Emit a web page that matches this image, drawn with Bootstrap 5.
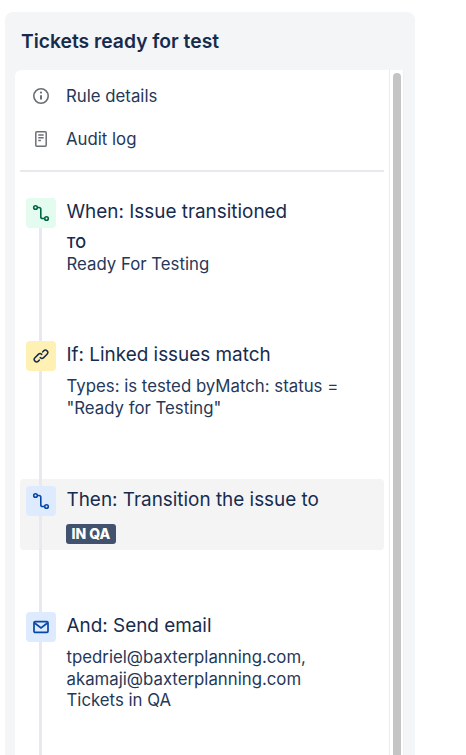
<!DOCTYPE html>
<html lang="en">
<head>
<meta charset="utf-8">
<title>Tickets ready for test</title>
<link href="https://cdn.jsdelivr.net/npm/bootstrap@5.3.0/dist/css/bootstrap.min.css" rel="stylesheet">
<style>
html,body{height:755px;overflow:hidden;background:#fff}
body{font-family:Inter,"Liberation Sans",sans-serif;color:#172b4d;font-size:16px}
.panel-shell{position:relative;margin:12px 0 0 5px;width:410px;height:743px;background:#f4f5f7;border-radius:8px 8px 0 0}
.panel-title{font-size:19.3px;font-weight:600;line-height:22px;padding:18px 0 0 16px;height:58px;margin:0;color:#172b4d}
.panel-body{margin-left:10px;width:389px;height:685px;background:#fff;border-radius:6px 0 0 0;overflow:hidden}
.panel-scroller{flex:1 1 auto;min-width:0}
.scroll-track{flex:0 0 14px;border-left:1px solid #ececec;border-right:1px solid #f0f0f0;padding:3px 2px 0 3px;background:#fff}
.scroll-thumb{width:8px;height:100%;background:#c4c4c4;border-radius:4px 4px 0 0}
.side-link{height:43px;padding-left:17px;gap:16px;font-size:16.8px;color:#253858}
.side-link span{padding-top:2px}
.side-icon{width:18px;height:18px;flex:none}
.rule-divider{height:2px;background:#e8e9ec;margin:10px 5px 0 5px}
.flow{position:relative;padding:0 5px 0 5px}
.flow-line{position:absolute;left:24px;top:40px;width:3px;height:600px;background:#e8e9ee;z-index:1}
.flow-step{position:relative;padding:0 6px;gap:10.5px;border-radius:4px}
.flow-step.active-step{background:#f4f4f4}
.step-badge{width:30px;height:30px;border-radius:4px;flex:none;position:relative;z-index:2}
.tone-green{background:#e3fcef;color:#006644}
.tone-yellow{background:#fff0b3;color:#172b4d}
.tone-blue{background:#deebff;color:#0747a6}
.step-title{font-size:18.9px;line-height:26px;color:#172b4d;margin-top:1px}
.step-text{font-size:16.8px;line-height:21.5px;color:#253858}
.to-label{font-size:14px;font-weight:600;line-height:22px;color:#172b4d;margin-top:7px}
.status-pill{display:inline-block;background:#42526e;color:#fff;font-size:14px;font-weight:800;line-height:20px;padding:0 5.5px;margin-left:-.5px;border-radius:3px}
.s1{height:169px;padding-top:26px}
.s2{height:138px}
.s3{height:71px;padding-top:7px}
.s4{height:120px;margin-top:62px}
</style>
</head>
<body>
<div class="panel-shell">
  <h1 class="panel-title">Tickets ready for test</h1>
  <div class="panel-body d-flex">
    <div class="panel-scroller">
      <div class="pt-1">
      <div class="side-link d-flex align-items-center">
        <svg class="side-icon" viewBox="0 0 18 18" fill="none" stroke="#6b6f76" stroke-width="1.6"><circle cx="9" cy="9" r="7.2"/><path d="M9 8.2v4.3" stroke-width="2"/><circle cx="9" cy="5.6" r="1.1" fill="#6b6f76" stroke="none"/></svg>
        <span>Rule details</span>
      </div>
      <div class="side-link d-flex align-items-center">
        <svg class="side-icon" viewBox="0 0 18 18" fill="none" stroke="#6b6f76" stroke-width="1.5"><rect x="3.8" y="1.8" width="10.4" height="14.4" rx="1"/><path d="M6.3 5h5.4M6.3 7.8h5.4M6.3 10.4h2.6"/></svg>
        <span>Audit log</span>
      </div>
      </div>
      <div class="rule-divider"></div>
      <div class="flow">
        <div class="flow-line"></div>
        <div class="flow-step s1 d-flex">
          <div class="step-badge tone-green d-flex align-items-center justify-content-center">
            <svg width="18" height="18" viewBox="0 0 18 18" fill="none" stroke="currentColor" stroke-width="1.6"><circle cx="3.5" cy="3.5" r="1.8"/><circle cx="14.5" cy="14.5" r="1.8"/><path d="M5.3 3.5h1.7a1.8 1.8 0 0 1 1.8 1.8v7.4a1.8 1.8 0 0 0 1.8 1.8h2.1"/></svg>
          </div>
          <div>
            <div class="step-title">When: Issue transitioned</div>
            <div class="to-label">TO</div>
            <div class="step-text">Ready For Testing</div>
          </div>
        </div>
        <div class="flow-step s2 d-flex">
          <div class="step-badge tone-yellow d-flex align-items-center justify-content-center">
            <svg width="16" height="16" viewBox="0 0 18 18" fill="none" stroke="currentColor" stroke-width="1.7" stroke-linecap="round"><path d="M7.2 13.6 6 14.8a2.7 2.7 0 0 1-3.8 0 2.7 2.7 0 0 1 0-3.8L6 7.2a2.7 2.7 0 0 1 3.8 0"/><path d="M10.8 4.4 12 3.2a2.7 2.7 0 0 1 3.8 0 2.7 2.7 0 0 1 0 3.8L12 10.8a2.7 2.7 0 0 1-3.8 0"/></svg>
          </div>
          <div>
            <div class="step-title">If: Linked issues match</div>
            <div class="step-text mt-2">Types: is tested byMatch: status =<br>"Ready for Testing"</div>
          </div>
        </div>
        <div class="flow-step active-step s3 d-flex">
          <div class="step-badge tone-blue d-flex align-items-center justify-content-center">
            <svg width="18" height="18" viewBox="0 0 18 18" fill="none" stroke="currentColor" stroke-width="1.6"><circle cx="3.5" cy="3.5" r="1.8"/><circle cx="14.5" cy="14.5" r="1.8"/><path d="M5.3 3.5h1.7a1.8 1.8 0 0 1 1.8 1.8v7.4a1.8 1.8 0 0 0 1.8 1.8h2.1"/></svg>
          </div>
          <div>
            <div class="step-title">Then: Transition the issue to</div>
            <div class="mt-2"><span class="status-pill">IN QA</span></div>
          </div>
        </div>
        <div class="flow-step s4 d-flex">
          <div class="step-badge tone-blue d-flex align-items-center justify-content-center">
            <svg width="18" height="18" viewBox="0 0 18 18" fill="none" stroke="currentColor" stroke-width="1.7"><rect x="2" y="3.6" width="14" height="10.8" rx="1.2"/><path d="M2.6 5l6.4 5 6.4-5"/></svg>
          </div>
          <div>
            <div class="step-title">And: Send email</div>
            <div class="step-text mt-2">tpedriel@baxterplanning.com,<br>akamaji@baxterplanning.com<br>Tickets in QA</div>
          </div>
        </div>
      </div>
    </div>
    <div class="scroll-track"><div class="scroll-thumb"></div></div>
  </div>
</div>
<script src="https://cdn.jsdelivr.net/npm/bootstrap@5.3.0/dist/js/bootstrap.bundle.min.js"></script>
</body>
</html>
